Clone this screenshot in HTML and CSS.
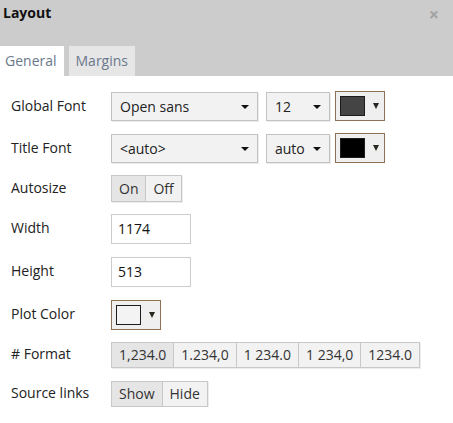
FILE: index.html
```html
<!DOCTYPE html>
<html>
<head>
<meta charset="utf-8">
<link rel="stylesheet" href="styles.css">
</head>
<body>
<div class="header">
  <div class="titlebar">
    <span class="title">Layout</span>
    <span class="close">×</span>
  </div>
  <div class="tabs">
    <div class="tab active">General</div>
    <div class="tab">Margins</div>
  </div>
</div>
<div class="content">
  <div class="row">
    <div class="label">Global Font</div>
    <div class="select font-select"><span>Open sans</span><i class="caret"></i></div>
    <div class="select size-select"><span>12</span><i class="caret"></i></div>
    <div class="color-btn inline"><span class="swatch swatch-dark"></span><i class="caret small"></i></div>
  </div>
  <div class="row">
    <div class="label">Title Font</div>
    <div class="select font-select"><span>&lt;auto&gt;</span><i class="caret"></i></div>
    <div class="select size-select"><span>auto</span><i class="caret"></i></div>
    <div class="color-btn inline"><span class="swatch swatch-black"></span><i class="caret small"></i></div>
  </div>
  <div class="row tight">
    <div class="label">Autosize</div>
    <div class="seg seg-auto"><span class="on">On</span><span>Off</span></div>
  </div>
  <div class="row tight">
    <div class="label">Width</div>
    <div class="input">1174</div>
  </div>
  <div class="row">
    <div class="label">Height</div>
    <div class="input">513</div>
  </div>
  <div class="row">
    <div class="label">Plot Color</div>
    <div class="color-btn"><span class="swatch swatch-light"></span><i class="caret small"></i></div>
  </div>
  <div class="row tight">
    <div class="label"># Format</div>
    <div class="seg seg-fmt"><span class="on">1,234.0</span><span>1.234,0</span><span>1 234.0</span><span>1 234,0</span><span>1234.0</span></div>
  </div>
  <div class="row">
    <div class="label">Source links</div>
    <div class="seg seg-fmt"><span class="on">Show</span><span>Hide</span></div>
  </div>
</div>
</body>
</html>
```

FILE: styles.css
```css
* { box-sizing: border-box; }
body {
  margin: 0;
  font-family: "Open Sans", "DejaVu Sans", sans-serif;
  font-size: 14px;
  color: #222;
  background: #fff;
}
.header {
  background: #cccccc;
  height: 76px;
  display: flex;
  flex-direction: column;
  justify-content: space-between;
}
.titlebar {
  display: flex;
  justify-content: space-between;
  align-items: flex-start;
  padding: 3px 14px 0 3px;
}
.title {
  font-weight: 700;
  line-height: 20px;
  color: #111;
}
.close {
  color: #a3a3a3;
  font-size: 18px;
  font-weight: 700;
  line-height: 20px;
  margin-top: 1px;
}
.tabs {
  display: flex;
  gap: 5px;
}
.tab {
  height: 30px;
  line-height: 30px;
  padding: 0 7px 0 7px;
  background: #e6e6e6;
  color: #6a788c;
}
.tab.active {
  background: #fff;
  padding: 0 7px 0 5px;
}
.content {
  padding: 16px 0 0 11px;
  display: flex;
  flex-direction: column;
  gap: 13px;
}
.row {
  display: flex;
  align-items: center;
}
.row.tight { margin-top: -1px; }
.label {
  width: 100px;
  flex: none;
  color: #222;
  margin-top: -3px;
}
.select {
  height: 29px;
  border: 1px solid #c2c2c2;
  background: #f2f2f2;
  box-shadow: 1px 1px 0 #ececec;
  display: flex;
  align-items: center;
  justify-content: space-between;
  padding: 0 8px 0 8px;
  color: #222;
  margin-right: 8px;
}
.font-select { width: 147px; }
.size-select { width: 64px; margin-right: 5px; }
.caret {
  width: 0;
  height: 0;
  border-left: 4px solid transparent;
  border-right: 4px solid transparent;
  border-top: 4px solid #111;
}
.caret.small {
  border-left-width: 3.5px;
  border-right-width: 3.5px;
  border-top: 6px solid #2a2620;
}
.color-btn {
  width: 50px;
  height: 30px;
  border: 1px solid #8e7052;
  background: #efefef;
  display: flex;
  align-items: center;
  padding-left: 4px;
  gap: 8px;
}
.color-btn.inline { margin-top: -1px; }
.swatch {
  width: 25px;
  height: 20px;
  border: 1px solid #1c1c1c;
}
.swatch-dark { background: #444; }
.swatch-black { background: #000; }
.swatch-light { background: #f3f3f3; }
.seg {
  display: flex;
  border: 1px solid #c8c8c8;
  box-shadow: 1px 1px 0 #ececec;
  background: #f2f2f2;
}
.seg span {
  padding: 0 7px;
  line-height: 25px;
  color: #333;
  border-left: 1px solid #c8c8c8;
}
.seg span:first-child { border-left: none; }
.seg span.on { background: #e5e5e5; }
.seg-auto span { line-height: 25px; padding: 0 7px; }
.seg-fmt span { line-height: 24px; }
.input {
  width: 80px;
  height: 30px;
  border: 1px solid #cccccc;
  background: #fff;
  line-height: 28px;
  padding-left: 6px;
  color: #111;
}
```
